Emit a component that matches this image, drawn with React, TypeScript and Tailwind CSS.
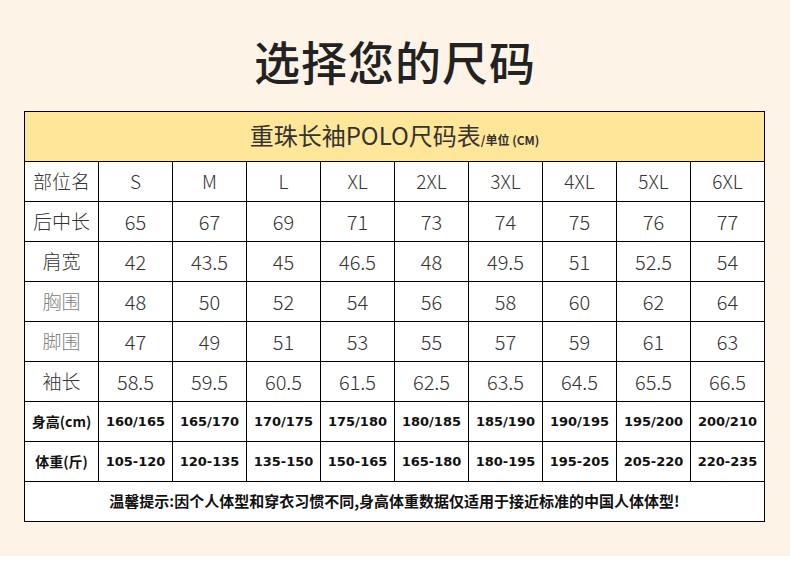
const sizes = ["S", "M", "L", "XL", "2XL", "3XL", "4XL", "5XL", "6XL"];

const rows: { label: string; muted?: boolean; values: string[] }[] = [
  { label: "后中长", values: ["65", "67", "69", "71", "73", "74", "75", "76", "77"] },
  { label: "肩宽", values: ["42", "43.5", "45", "46.5", "48", "49.5", "51", "52.5", "54"] },
  { label: "胸围", muted: true, values: ["48", "50", "52", "54", "56", "58", "60", "62", "64"] },
  { label: "脚围", muted: true, values: ["47", "49", "51", "53", "55", "57", "59", "61", "63"] },
  { label: "袖长", values: ["58.5", "59.5", "60.5", "61.5", "62.5", "63.5", "64.5", "65.5", "66.5"] },
];

const bodyRows = [
  {
    label: "身高(cm)",
    values: ["160/165", "165/170", "170/175", "175/180", "180/185", "185/190", "190/195", "195/200", "200/210"],
  },
  {
    label: "体重(斤)",
    values: ["105-120", "120-135", "135-150", "150-165", "165-180", "180-195", "195-205", "205-220", "220-235"],
  },
];

const cjk = "font-['Noto_Sans_CJK_SC',sans-serif]";
const cell = "border border-black h-[40px] p-0 text-center align-middle";

const App = () => {
  return (
    <div className="w-[790px] h-[556px] bg-[#fdf3e7]">
      <div className="h-[111px] flex justify-center pt-[30px]">
        <h1 className={`${cjk} text-[46px] leading-[60px] font-medium text-[#222] tracking-[1px]`}>
          选择您的尺码
        </h1>
      </div>

      <table className={`${cjk} ml-[24px] w-[741px] table-fixed border-collapse bg-white text-[#333]`}>
        <tbody>
          <tr>
            <td colSpan={10} className="border border-black h-[50px] p-0 bg-[#ffe699] text-center align-middle">
              <span className="text-[24px] leading-none">重珠长袖POLO尺码表</span>
              <span className="text-[12px] font-bold">/单位 (CM)</span>
            </td>
          </tr>
          <tr>
            <td className={`${cell} text-[19px] font-light`}>部位名</td>
            {sizes.map((s) => (
              <td key={s} className={`${cell} text-[19px] font-light`}>
                {s}
              </td>
            ))}
          </tr>
          {rows.map((r) => (
            <tr key={r.label}>
              <td className={`${cell} text-[19px] font-light ${r.muted ? "text-[#808080]" : ""}`}>{r.label}</td>
              {r.values.map((v, i) => (
                <td key={i} className={`${cell} text-[20px] font-light`}>
                  {v}
                </td>
              ))}
            </tr>
          ))}
          {bodyRows.map((r) => (
            <tr key={r.label}>
              <td className={`${cell} text-[14px] font-bold text-[#111]`}>{r.label}</td>
              {r.values.map((v, i) => (
                <td key={i} className={`${cell} font-['DejaVu_Sans',sans-serif] text-[13px] font-bold text-[#111]`}>
                  {v}
                </td>
              ))}
            </tr>
          ))}
          <tr>
            <td colSpan={10} className={`${cell} text-[15px] font-bold text-[#111]`}>
              温馨提示:因个人体型和穿衣习惯不同,身高体重数据仅适用于接近标准的中国人体体型!
            </td>
          </tr>
        </tbody>
      </table>
    </div>
  );
};

export default App;
